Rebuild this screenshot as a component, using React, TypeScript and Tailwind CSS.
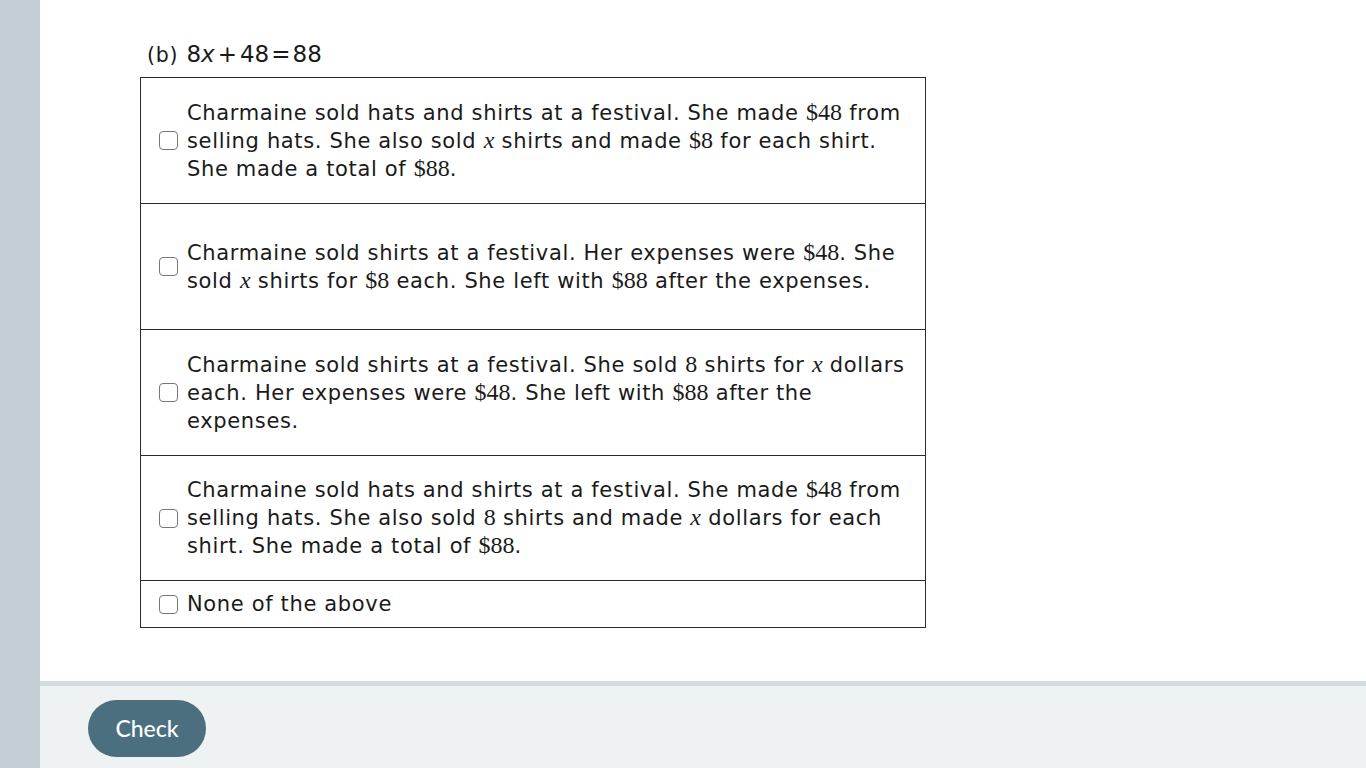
import type { ReactNode } from 'react';

const M = ({ children, i }: { children: ReactNode; i?: boolean }) => (
  <span className={`font-['Liberation_Serif','DejaVu_Serif',serif] text-[24px] leading-none tracking-normal ${i ? 'italic' : ''}`}>{children}</span>
);

interface Choice {
  id: number;
  body: ReactNode;
  h: string;
}

const choices: Choice[] = [
  {
    id: 1,
    h: 'h-[125px]',
    body: (
      <>
        Charmaine sold hats and shirts at a festival. She made <M>$48</M> from selling hats. She also sold <M i>x</M>{' '}
        shirts and made <M>$8</M> for each shirt. She made a total of <M>$88</M>.
      </>
    ),
  },
  {
    id: 2,
    h: 'h-[126px]',
    body: (
      <>
        Charmaine sold shirts at a festival. Her expenses were <M>$48</M>. She sold <M i>x</M> shirts for <M>$8</M> each.
        She left with <M>$88</M> after the expenses.
      </>
    ),
  },
  {
    id: 3,
    h: 'h-[126px]',
    body: (
      <>
        Charmaine sold shirts at a festival. She sold <M>8</M> shirts for <M i>x</M> dollars each. Her expenses were{' '}
        <M>$48</M>. She left with <M>$88</M> after the expenses.
      </>
    ),
  },
  {
    id: 4,
    h: 'h-[125px]',
    body: (
      <>
        Charmaine sold hats and shirts at a festival. She made <M>$48</M> from selling hats. She also sold <M>8</M>{' '}
        shirts and made <M i>x</M> dollars for each shirt. She made a total of <M>$88</M>.
      </>
    ),
  },
  { id: 5, h: 'h-[47px]', body: <>None of the above</> },
];

export default function App() {
  return (
    <div className="flex h-[768px] w-[1366px] overflow-hidden bg-white font-['DejaVu_Sans',sans-serif] text-[#1a1a1a]">
      <div className="w-10 shrink-0 bg-[#c3cfd4]" />
      <div className="flex flex-1 flex-col">
        <div className="flex-1 pl-[100px] pt-[40px]">
          <div className="flex items-baseline gap-[8px] pl-[7px] text-[20.5px] leading-7 tracking-[0.8px]">
            <span>(b)</span>
            <span className="text-[23px] tracking-normal">
              8<span className="italic">x</span>
              <span className="px-[3px]">+</span>48<span className="px-[2px]">=</span>88
            </span>
          </div>
          <div className="mt-[8px] w-[786px] border-[1.5px] border-[#2b2b2b]">
            {choices.map((c, idx) => (
              <label
                key={c.id}
                className={`flex items-center gap-[9px] pl-[18px] pr-[16px] ${c.h} ${idx > 0 ? 'border-t border-[#2b2b2b]' : ''}`}
              >
                <span className="h-[19px] w-[19px] shrink-0 rounded-[4px] border-[1.5px] border-[#777] bg-white" />
                <span className="text-[21px] leading-7 tracking-[0.65px]">{c.body}</span>
              </label>
            ))}
          </div>
        </div>
        <div className="h-[87px] border-t-[5px] border-[#d3dcdf] bg-[#eef2f3] pl-[48px] pt-[14px]">
          <button className="h-[57px] w-[118px] rounded-full bg-[#4b6f7e] font-['Lato',sans-serif] text-[23px] font-medium text-white">
            Check
          </button>
        </div>
      </div>
    </div>
  );
}
